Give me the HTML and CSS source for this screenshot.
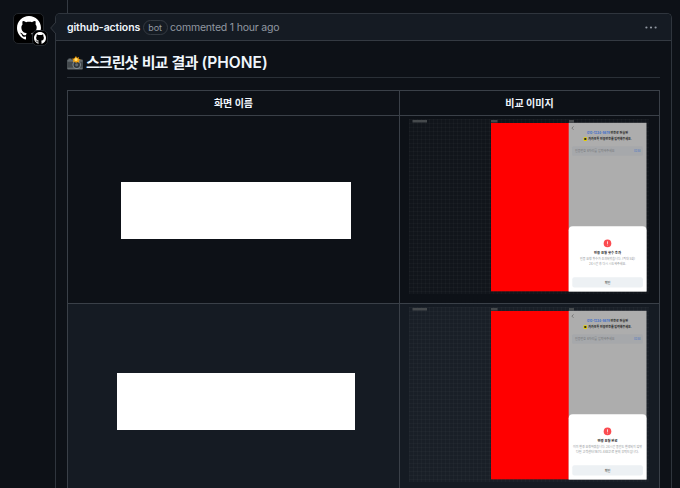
FILE: index.html
```
<!DOCTYPE html>
<html lang="ko">
<head>
<meta charset="utf-8">
<title>github-actions comment</title>
<link rel="stylesheet" href="styles.css">
</head>
<body>
<svg width="0" height="0" class="defs">
  <defs>
    <symbol id="mark" viewBox="0 0 16 16"><path d="M8 0C3.58 0 0 3.58 0 8c0 3.54 2.29 6.53 5.47 7.59.4.07.55-.17.55-.38 0-.19-.01-.82-.01-1.49-2.01.37-2.53-.49-2.69-.94-.09-.23-.48-.94-.82-1.13-.28-.15-.68-.52-.01-.53.63-.01 1.08.58 1.23.82.72 1.21 1.87.87 2.33.66.07-.52.28-.87.51-1.07-1.78-.2-3.64-.89-3.64-3.95 0-.87.31-1.59.82-2.15-.08-.2-.36-1.02.08-2.12 0 0 .67-.21 2.2.82.64-.18 1.32-.27 2-.27s1.36.09 2 .27c1.53-1.04 2.2-.82 2.2-.82.44 1.1.16 1.92.08 2.12.51.56.82 1.27.82 2.15 0 3.07-1.87 3.75-3.65 3.95.29.25.54.73.54 1.48 0 1.07-.01 1.93-.01 2.2 0 .21.15.46.55.38A8.01 8.01 0 0 0 16 8c0-4.42-3.58-8-8-8Z"/></symbol>
    <pattern id="grid" width="4" height="4" patternUnits="userSpaceOnUse"><path d="M0 .5H4M.5 0V4" stroke="#a0a0a0" stroke-opacity=".035"/></pattern>
    <symbol id="screens" viewBox="0 0 240 175">
      <rect width="240" height="175" fill="#fff" fill-opacity=".018"/>
      <rect width="240" height="175" fill="url(#grid)"/>
      <g fill="#45494c"><rect x="3.5" y="1" width="14.5" height="2.5"/><rect x="82" y="1" width="6.5" height="2.5"/><rect x="160" y="1" width="5" height="2.5"/></g>
      <rect x="82" y="4" width="78" height="168.3" fill="#f00"/>
      <rect x="159.7" y="3.8" width="77.8" height="168.7" fill="#adadad"/>
      <path d="M164.5 7.4l-1.6 1.7 1.6 1.7" fill="none" stroke="#555" stroke-width=".6"/>
      <text x="178" y="15.3" class="line" textLength="23" lengthAdjust="spacingAndGlyphs" fill="#3f6fca">010-1234-5678</text>
      <text x="201.5" y="15.3" class="line" textLength="17.5" lengthAdjust="spacingAndGlyphs" fill="#222">번호로 전송된</text>
      <rect x="174.5" y="18.3" width="3.6" height="3.6" rx=".8" fill="#e6cf00"/><ellipse cx="176.3" cy="20" rx="1.2" ry="1" fill="#222"/>
      <text x="179.3" y="21.3" class="line" textLength="43.5" lengthAdjust="spacingAndGlyphs" fill="#222">카카오톡 인증번호를 입력해주세요.</text>
      <rect x="163" y="27.2" width="70.8" height="9.6" rx="1.5" fill="#a6a8ab"/>
      <text x="166" y="33.2" class="small" textLength="39.5" lengthAdjust="spacingAndGlyphs" fill="#75777a">인증번호 6자리를 입력해주세요</text>
      <text x="225" y="33.2" class="small" textLength="6.5" lengthAdjust="spacingAndGlyphs" fill="#3f6fca">02:58</text>
      <path d="M159.7 111.3a4 4 0 0 1 4-4h69.8a4 4 0 0 1 4 4v61.2h-77.8z" fill="#fff"/>
      <circle cx="198.5" cy="124.4" r="3.8" fill="#fb4b50"/><path d="M198.5 122.3v2.6M198.5 125.7v.7" stroke="#fff" stroke-width=".75"/>
      <rect x="163.3" y="158.2" width="70.6" height="10.4" rx="2" fill="#edf1f4"/>
      <text x="198.6" y="164.6" class="small" text-anchor="middle" fill="#333">확인</text>
    </symbol>
  </defs>
</svg>
<div class="thread">
  <div class="avatar"><svg class="cat"><use href="#mark"/></svg><span class="badge"><svg><use href="#mark"/></svg></span></div>
  <article class="comment">
    <svg class="caret" viewBox="0 0 6 12"><path d="M6 0L.7 6 6 12" fill="#151b23" stroke="#343a42"/></svg>
    <header class="head">
      <strong class="author">github-actions</strong><span class="bot">bot</span><span class="when">commented 1 hour ago</span>
      <svg class="more" viewBox="0 0 12 3"><circle cx="1.4" cy="1.5" r="1.1"/><circle cx="6" cy="1.5" r="1.1"/><circle cx="10.6" cy="1.5" r="1.1"/></svg>
    </header>
    <div class="body">
      <h2 class="title">
        <svg class="camera" viewBox="0 0 16 15"><path d="M1.5 2.4h3v1.2H15a.8.8 0 0 1 .8.8v8.4a.8.8 0 0 1-.8.8H1a.8.8 0 0 1-.8-.8V4.4a.8.8 0 0 1 .8-.8h.5z" fill="#666d71"/><path d="M.2 5.7h15.6v6H.2z" fill="#42484c"/><circle cx="9.7" cy="8.8" r="4.2" fill="#858e94"/><circle cx="9.7" cy="8.8" r="3.2" fill="#30363b"/><circle cx="9.7" cy="8.8" r="1.6" fill="#5f686f"/><path d="M9 0l1 2 2-1-.4 2 2.2.8-2 1 .4 2-2.2-.8L9 7.2 8 5.5l-2.2.5.7-2-1.7-1.3 2.3-.3z" fill="#f5a20c"/><circle cx="9" cy="3.6" r="1.5" fill="#ffe078"/></svg>
        <span class="title-text"><span class="hangul">스크린샷 비교 결과 </span>(PHONE)</span>
      </h2>
      <table class="results">
        <thead><tr><th class="name">화면 이름</th><th>비교 이미지</th></tr></thead>
        <tbody>
          <tr>
            <td><div class="mask"></div></td>
            <td><svg class="shot" viewBox="0 0 240 175"><use href="#screens"/>
              <text x="185" y="135" class="line" textLength="27" lengthAdjust="spacingAndGlyphs" fill="#222">인증 요청 횟수 초과</text>
              <text x="171" y="141.4" class="small" textLength="55" lengthAdjust="spacingAndGlyphs" fill="#929699">인증 요청 횟수가 초과되었습니다. (최대 5회)</text>
              <text x="180" y="146.4" class="small" textLength="37" lengthAdjust="spacingAndGlyphs" fill="#929699">24시간 후 다시 시도해주세요.</text>
            </svg></td>
          </tr>
          <tr class="alt">
            <td><div class="mask wide"></div></td>
            <td><svg class="shot" viewBox="0 0 240 175"><use href="#screens"/>
              <text x="188.5" y="135" class="line" textLength="20" lengthAdjust="spacingAndGlyphs" fill="#222">변경 요청 완료</text>
              <text x="164" y="141.4" class="small" textLength="69" lengthAdjust="spacingAndGlyphs" fill="#929699">이미 변경 요청하였습니다. 24시간 동안도 변경되지 않았</text>
              <text x="167" y="146.4" class="small" textLength="63" lengthAdjust="spacingAndGlyphs" fill="#929699">다면 고객센터(1670-4482)로 문의 부탁드립니다.</text>
            </svg></td>
          </tr>
        </tbody>
      </table>
    </div>
  </article>
</div>
</body>
</html>
```
FILE: styles.css
```
* { box-sizing: border-box; }
html, body { height: 100%; }
body {
  margin: 0;
  overflow: hidden;
  background: #0d1117;
  color: #f0f6fc;
  font-family: Inter, "Noto Sans CJK KR", sans-serif;
  font-size: 10.5px;
}
svg { display: block; }
.defs { position: absolute; }
.thread {
  display: flex;
  align-items: flex-start;
  gap: 11px;
  height: 488px;
  padding: 13px 8px 0 13px;
}
.avatar {
  position: relative;
  flex: none;
  width: 31px;
  height: 31px;
  padding: 3px;
  border: 1px solid #22262b;
  border-radius: 5px;
  background: #000;
}
.cat { width: 24px; height: 24px; fill: #fff; margin-top: -1px; }
.badge {
  position: absolute;
  right: -5px;
  bottom: -3px;
  padding: 1px;
  border: 1px solid #24292f;
  border-radius: 5px;
  background: #000;
}
.badge svg { width: 12px; height: 12px; fill: #fff; }
.comment {
  position: relative;
  flex: 1;
  height: 475px;
  border: 1px solid #2f353d;
  border-bottom: 0;
  border-radius: 5px 5px 0 0;
}
.comment::before {
  content: "";
  position: absolute;
  left: 11px;
  top: -14px;
  width: 1px;
  height: 13px;
  background: #343a42;
}
.caret { position: absolute; left: -6px; top: 8px; width: 6px; height: 12px; }
.head {
  display: flex;
  align-items: center;
  height: 27px;
  padding: 0 14px 0 11px;
  border-bottom: 1px solid #343a42;
  border-radius: 4px 4px 0 0;
  background: #151b23;
}
.author { font-weight: 600; font-size: 10.5px; letter-spacing: -0.1px; }
.bot {
  height: 15px;
  margin: 0 2.5px;
  padding: 0 4.5px;
  border: 1px solid #343a42;
  border-radius: 8px;
  color: #9198a1;
  font-size: 9px;
  line-height: 13px;
}
.when { color: #9198a1; letter-spacing: -0.2px; }
.more { width: 12px; height: 3px; margin-left: auto; fill: #9198a1; }
.body { height: 447px; padding: 12px 11px 0; overflow: hidden; }
.title {
  display: flex;
  align-items: center;
  gap: 3px;
  height: 25px;
  margin: 0 0 12px;
  padding-bottom: 4px;
  border-bottom: 1px solid #2a3037;
  font-size: 15.5px;
  font-weight: 600;
  white-space: nowrap;
}
.camera { width: 16px; height: 15px; }
.title-text { line-height: 20px; }
.hangul { font-size: 15px; letter-spacing: -0.95px; word-spacing: 1.4px; }
.results {
  width: 593px;
  table-layout: fixed;
  border-collapse: collapse;
}
.results th, .results td { border: 1px solid #3a4048; }
.results th { height: 25px; padding: 0; font-size: 10px; font-weight: 700; line-height: 14px; }
.results .name { width: 332px; }
.results td { height: 188px; padding: 0; vertical-align: middle; }
.results td:first-child { padding: 1px 0 0 5px; }
.results td:last-child { padding: 3px 0 0 9px; vertical-align: top; }
.alt { background: #151b23; }
.mask { width: 230px; height: 57px; margin: 0 auto; background: #fff; }
.mask.wide { width: 238px; margin-top: 7px; }
.shot { width: 240px; height: 175px; }
.line { font-size: 3.6px; font-weight: 700; }
.small { font-size: 3.2px; }
```
